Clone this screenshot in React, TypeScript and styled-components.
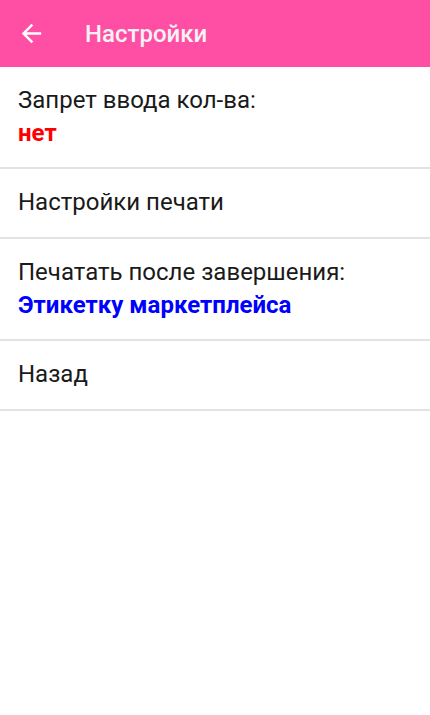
import styled, { createGlobalStyle } from "styled-components";

const GlobalStyle = createGlobalStyle`
  html, body {
    margin: 0;
    padding: 0;
    background: #ffffff;
  }
  body {
    font-family: Roboto, "Noto Sans", "Liberation Sans", sans-serif;
  }
`;

const Screen = styled.div`
  width: 430px;
  min-height: 715px;
  background: #ffffff;
  display: flex;
  flex-direction: column;
`;

const Toolbar = styled.header`
  height: 67px;
  background: #ff4fa5;
  display: flex;
  align-items: center;
  padding-left: 17px;
  box-sizing: border-box;
`;

const BackButton = styled.button`
  width: 29px;
  height: 29px;
  padding: 0;
  border: none;
  background: transparent;
  display: flex;
  align-items: center;
  justify-content: center;
  cursor: pointer;
`;

const Title = styled.h1`
  margin: 0 0 0 39px;
  font-size: 24px;
  font-weight: 500;
  color: #f2f2f2;
`;

const List = styled.div`
  display: flex;
  flex-direction: column;
`;

const Row = styled.div`
  padding: 17px 18px 18px;
  border-bottom: 2px solid #e2e2e2;
  display: flex;
  flex-direction: column;
  font-size: 24px;
  color: #1a1a1a;
`;

const Label = styled.span`
  line-height: 33px;
`;

const Value = styled.span<{ $color: string }>`
  line-height: 32px;
  color: ${(p) => p.$color};
  font-weight: 700;
`;

const ArrowBack = () => (
  <svg width="29" height="29" viewBox="0 0 24 24" fill="#ffffff">
    <path d="M20 11H7.83l5.59-5.59L12 4l-8 8 8 8 1.41-1.41L7.83 13H20v-2z" />
  </svg>
);

function App() {
  return (
    <Screen>
      <GlobalStyle />
      <Toolbar>
        <BackButton aria-label="Назад">
          <ArrowBack />
        </BackButton>
        <Title>Настройки</Title>
      </Toolbar>
      <List>
        <Row>
          <Label>Запрет ввода кол-ва:</Label>
          <Value $color="#ff0000">нет</Value>
        </Row>
        <Row>
          <Label>Настройки печати</Label>
        </Row>
        <Row>
          <Label>Печатать после завершения:</Label>
          <Value $color="#0000ff">Этикетку маркетплейса</Value>
        </Row>
        <Row>
          <Label>Назад</Label>
        </Row>
      </List>
    </Screen>
  );
}

export default App;
